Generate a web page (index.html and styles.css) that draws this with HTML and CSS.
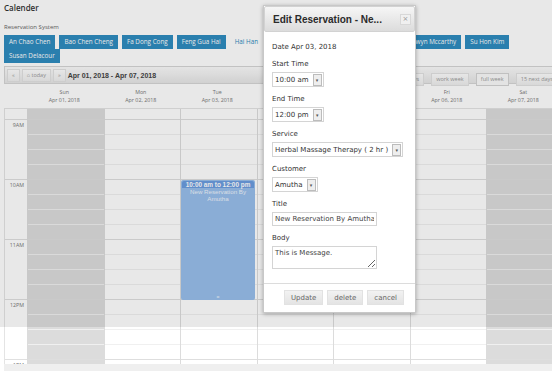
FILE: index.html
```html
<!DOCTYPE html>
<html lang="en">
<head>
  <meta charset="UTF-8">
  <title>Calender</title>
  <link rel="stylesheet" href="styles.css">
</head>
<body>

  <h1 class="page-title">Calender</h1>
  <p class="subtitle">Reservation System</p>

  <!-- staff filter -->
  <div class="staff-list">
    <span class="staff-btn">An Chao Chen</span>
    <span class="staff-btn">Bao Chen Cheng</span>
    <span class="staff-btn">Fa Dong Cong</span>
    <span class="staff-btn">Feng Gua Hai</span>
    <span class="staff-btn active">Hai Han</span>
    <span class="staff-btn">Jian Hong Li</span>
    <span class="staff-btn">Kai Ming Wu</span>
    <span class="staff-btn">Lu Na</span>
    <span class="staff-btn">Glenwyn Mccarthy</span>
    <span class="staff-btn">Su Hon Kim</span>
    <span class="staff-btn">Susan Delacour</span>
  </div>

  <!-- calendar -->
  <div class="calendar">
    <div class="toolbar">
      <span class="tb-btn">&laquo;</span>
      <span class="tb-btn">&#8962; today</span>
      <span class="tb-btn">&raquo;</span>
      <span class="range">Apr 01, 2018 - Apr 07, 2018</span>
      <div class="views">
        <span class="tb-btn">next 7 days</span>
        <span class="tb-btn">work week</span>
        <span class="tb-btn current">full week</span>
        <span class="tb-btn">15 next days</span>
      </div>
    </div>

    <div class="day-head">
      <div></div>
      <div class="dh"><span>Sun</span><span>Apr 01, 2018</span></div>
      <div class="dh"><span>Mon</span><span>Apr 02, 2018</span></div>
      <div class="dh"><span>Tue</span><span>Apr 03, 2018</span></div>
      <div class="dh"><span>Wed</span><span>Apr 04, 2018</span></div>
      <div class="dh"><span>Thu</span><span>Apr 05, 2018</span></div>
      <div class="dh"><span>Fri</span><span>Apr 06, 2018</span></div>
      <div class="dh"><span>Sat</span><span>Apr 07, 2018</span></div>
    </div>

    <div class="grid">
      <div class="times">
        <div class="t-top"></div>
        <div class="t-hour">9AM</div>
        <div class="t-hour">10AM</div>
        <div class="t-hour">11AM</div>
        <div class="t-hour">12PM</div>
        <div class="t-hour">1PM</div>
      </div>
      <div class="day weekend"></div>
      <div class="day"></div>
      <div class="day">
        <div class="event" style="top: 71px; height: 120px;">
          <div class="event-time">10:00 am to 12:00 pm</div>
          <div class="event-title">New Reservation By Amutha</div>
          <div class="event-grip">=</div>
        </div>
      </div>
      <div class="day"></div>
      <div class="day"></div>
      <div class="day"></div>
      <div class="day weekend"></div>
    </div>
    <div class="scrollbar"></div>
  </div>

  <div class="overlay"></div>

  <!-- edit dialog -->
  <div class="dialog">
    <div class="dialog-head">
      <span class="dialog-title">Edit Reservation - Ne...</span>
      <span class="dialog-close">&times;</span>
    </div>
    <div class="dialog-body">
      <p class="date-line">Date Apr 03, 2018</p>

      <label>Start Time</label>
      <div class="select"><span>10:00 am</span><i>&#9662;</i></div>

      <label>End Time</label>
      <div class="select"><span>12:00 pm</span><i>&#9662;</i></div>

      <label>Service</label>
      <div class="select"><span>Herbal Massage Therapy ( 2 hr )</span><i>&#9662;</i></div>

      <label>Customer</label>
      <div class="select"><span>Amutha</span><i>&#9662;</i></div>

      <label>Title</label>
      <input type="text" class="field" value="New Reservation By Amutha">

      <label>Body</label>
      <textarea class="field area">This is Message.</textarea>
    </div>
    <div class="dialog-foot">
      <button>Update</button>
      <button>delete</button>
      <button>cancel</button>
    </div>
  </div>

</body>
</html>
```

FILE: styles.css
```css
html, body {
  overflow: hidden;
}

body {
  margin: 0;
  padding: 0 4px;
  background-color: white;
  color: #333;
  font-family: "Open Sans", Arial, sans-serif;
  position: relative;
  height: 371px;
}

.page-title {
  margin: 0;
  padding-top: 2px;
  font-size: 8px;
  line-height: 12px;
  font-weight: 600;
  color: #333;
}

.subtitle {
  margin: 9px 0 0;
  font-size: 6px;
  line-height: 8px;
  color: #666;
}

.staff-list {
  margin-top: 4px;
  width: 540px;
  font-size: 0;
}

.staff-btn {
  display: inline-block;
  background-color: #2f8cc0;
  color: white;
  font-size: 6.3px;
  line-height: 14px;
  padding: 0 5px;
  margin-right: 4px;
}

.staff-btn.active {
  background-color: white;
  color: #2f8cc0;
}

/* calendar */
.calendar {
  width: 557px;
  margin-top: 3px;
}

.toolbar {
  display: flex;
  align-items: center;
  height: 16px;
  border: 1px solid #d6d6d6;
  background: linear-gradient(#fbfbfb, #e6e6e6);
  padding: 0 2px;
}

.tb-btn {
  display: inline-block;
  font-size: 5.5px;
  line-height: 11px;
  padding: 0 4px;
  margin-right: 2px;
  color: #999;
  border: 1px solid #e2e2e2;
  background: linear-gradient(#fdfdfd, #eeeeee);
}

.tb-btn.current {
  background: #fafafa;
  border-color: #d4d4d4;
}

.range {
  font-family: "Liberation Sans", Arial, sans-serif;
  font-weight: bold;
  font-size: 7px;
  color: #444;
}

.views {
  margin-left: auto;
}

.views .tb-btn {
  margin: 0 0 0 3px;
}

.day-head {
  display: grid;
  grid-template-columns: 22px repeat(7, 76.5px);
  height: 24px;
  border-bottom: 1px solid #e4e4e4;
}

.dh {
  display: flex;
  flex-direction: column;
  align-items: center;
  justify-content: center;
  font-size: 5.3px;
  line-height: 8px;
  color: #777;
}

.grid {
  display: grid;
  grid-template-columns: 22px repeat(7, 76.5px);
  height: 255px;
  overflow: hidden;
  border-left: 1px solid #e4e4e4;
}

.times {
  font-size: 5.3px;
  color: #777;
  background:
    repeating-linear-gradient(to bottom, transparent 0 59px, #e0e0e0 59px 60px) 0 -49px;
}

.t-top {
  height: 11px;
}

.t-hour {
  height: 60px;
  text-align: right;
  padding-right: 3px;
  line-height: 10px;
}

.day {
  position: relative;
  border-left: 1px solid #dcdcdc;
  background:
    repeating-linear-gradient(to bottom, transparent 0 59px, #dedede 59px 60px) 0 -49px,
    repeating-linear-gradient(to bottom, transparent 0 14px, #f0f0f0 14px 15px) 0 -4px;
}

.day.weekend {
  background-color: #dcdcdc;
}

.event {
  position: absolute;
  left: 0;
  width: 74px;
  background-color: #98bfec;
  border-radius: 2px;
  text-align: center;
  font-family: "Liberation Sans", Arial, sans-serif;
  color: #eef4fc;
  font-size: 6.2px;
  line-height: 7px;
}

.event-time {
  margin: 1px 1px 0;
  background-color: #6b9de0;
  color: white;
  font-weight: bold;
  font-size: 6.4px;
  border-radius: 2px 2px 0 0;
}

.event-title {
  padding: 0 4px;
}

.event-grip {
  position: absolute;
  bottom: 0;
  left: 0;
  right: 0;
  font-size: 5px;
  line-height: 5px;
}

.scrollbar {
  height: 8px;
  background-color: #efefef;
}

.overlay {
  position: absolute;
  top: 0;
  left: 0;
  width: 100%;
  height: 327px;
  background: rgba(0, 0, 0, 0.09);
}

/* dialog */
.dialog {
  position: absolute;
  left: 263px;
  top: 5px;
  width: 151px;
  height: 306px;
  background: white;
  border: 1px solid #c8c8c8;
  box-shadow: 0 1px 4px rgba(0, 0, 0, 0.3);
  font-family: "DejaVu Sans", Verdana, sans-serif;
  font-size: 7px;
  color: #333;
}

.dialog-head {
  display: flex;
  align-items: center;
  justify-content: space-between;
  height: 24px;
  padding: 0 3px 0 8px;
  border: 1px solid #d2d2d2;
  border-radius: 2px;
  background: linear-gradient(#f6f6f6, #dcdcdc);
}

.dialog-title {
  font-family: "Liberation Sans", Arial, sans-serif;
  font-weight: bold;
  font-size: 10px;
  color: #2b2b2b;
}

.dialog-close {
  width: 9px;
  height: 9px;
  line-height: 8px;
  text-align: center;
  font-size: 7px;
  color: #999;
  background: #f0f0f0;
  border: 1px solid #d8d8d8;
}

.dialog-body {
  padding: 10px 8px 0;
  height: 241px;
}

.date-line {
  margin: 0 0 7px;
  line-height: 10px;
}

.dialog-body label {
  display: block;
  line-height: 10px;
  margin-bottom: 3px;
}

.select {
  display: inline-flex;
  align-items: center;
  height: 13px;
  padding: 0 1px 0 2px;
  border: 1px solid #d4d4d4;
  margin-bottom: 7px;
  color: #333;
}

.select span {
  margin-right: 4px;
}

.select i {
  font-style: normal;
  font-size: 5px;
  width: 7px;
  height: 10px;
  line-height: 10px;
  text-align: center;
  border: 1px solid #bcbcbc;
  background: #eeeeee;
  color: #555;
}

.field {
  display: block;
  box-sizing: border-box;
  width: 105px;
  height: 14px;
  padding: 0 2px;
  margin: 0 0 7px;
  border: 1px solid #d4d4d4;
  font-family: "DejaVu Sans", Verdana, sans-serif;
  font-size: 7px;
  color: #444;
}

.field.area {
  height: 23px;
  padding: 2px;
  resize: both;
}

.dialog-foot {
  border-top: 1px solid #dcdcdc;
  padding: 6px 11px 0 0;
  display: flex;
  justify-content: flex-end;
  gap: 4px;
}

.dialog-foot button {
  font-family: "DejaVu Sans", Verdana, sans-serif;
  font-size: 7px;
  color: #666;
  height: 15px;
  padding: 0 6px;
  border: 1px solid #e2e2e2;
  background: linear-gradient(#f2f2f2, #e4e4e4);
}
```
